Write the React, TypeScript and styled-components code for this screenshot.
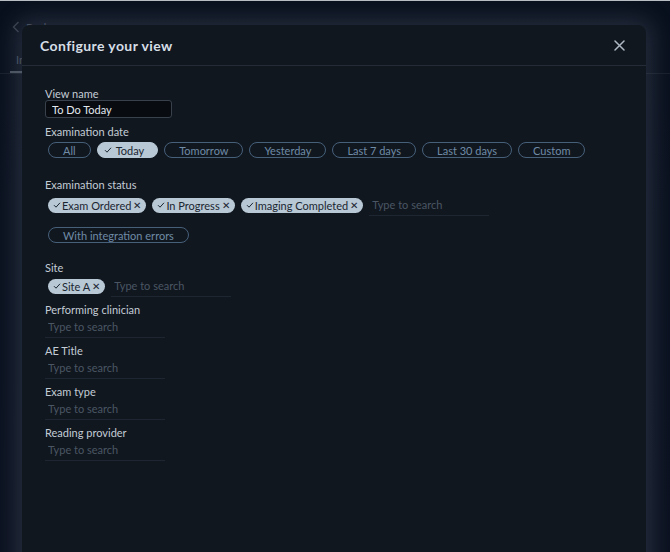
import React, { FC } from 'react';
import styled, { createGlobalStyle } from 'styled-components';

const GlobalStyle = createGlobalStyle`
    html, body {
        margin: 0;
        padding: 0;
        background: #0b1322;
        font-family: Lato, "Noto Sans", sans-serif;
        overflow: hidden;
    }
`;

const Page = styled.div`
    position: relative;
    width: 670px;
    height: 552px;
    overflow: hidden;
    background: linear-gradient(180deg, #0b1222 0%, #0d1526 60%, #0e1626 100%);
    border-top: 1px solid #b8bdc4;
    box-sizing: border-box;
`;

const TopBar = styled.div`
    display: flex;
    align-items: center;
    gap: 6px;
    height: 52px;
    padding-left: 12px;
    color: #8a96a6;
    font-size: 11px;
`;

const Tabs = styled.div`
    display: flex;
    height: 20px;
    border-bottom: 1px solid #2a3342;
`;

const Tab = styled.div`
    padding: 0 6px;
    margin-left: 10px;
    color: #8a96a6;
    font-size: 11px;
    border-bottom: 2px solid #9aa6b4;
`;

const Overlay = styled.div`
    position: absolute;
    inset: 0;
    background: rgba(9, 14, 26, 0.55);
    padding: 24px 0 0 22px;
`;

const Dialog = styled.div`
    width: 624px;
    height: 600px;
    background: #11171f;
    border-radius: 8px;
    box-shadow: 0 0 22px 6px rgba(96, 110, 132, 0.32);
    color: #c9d2db;
`;

const Header = styled.div`
    display: flex;
    align-items: center;
    justify-content: space-between;
    height: 40px;
    padding: 0 18px;
    border-bottom: 1px solid #242c37;
`;

const Title = styled.h2`
    margin: 0;
    font-size: 14px;
    font-weight: 700;
    color: #d6dee6;
    letter-spacing: 0.4px;
`;

const CloseButton = styled.button`
    display: flex;
    align-items: center;
    justify-content: center;
    width: 18px;
    height: 18px;
    padding: 0;
    background: none;
    border: none;
    cursor: pointer;
`;

const Body = styled.div`
    display: flex;
    flex-direction: column;
    padding: 21px 23px;
`;

const Field = styled.div<{ $gap?: number }>`
    display: flex;
    flex-direction: column;
    margin-top: ${(p) => p.$gap ?? 0}px;
`;

const Label = styled.label`
    font-size: 11px;
    line-height: 13px;
    color: #c3ccd5;
`;

const NameInput = styled.input`
    width: 127px;
    height: 18px;
    margin-top: 0;
    box-sizing: border-box;
    padding: 0 6px;
    background: #080c11;
    border: 1px solid #38414c;
    border-radius: 3px;
    color: #e2e8ee;
    font-family: inherit;
    font-size: 11px;
    outline: none;
`;

const ChipRow = styled.div<{ $top?: number }>`
    display: flex;
    flex-wrap: wrap;
    align-items: center;
    gap: 6px;
    margin-top: ${(p) => p.$top ?? 0}px;
    padding-left: 3px;
`;

const Chip = styled.button<{ $selected?: boolean }>`
    display: flex;
    align-items: center;
    gap: 3px;
    height: 16px;
    padding: 0 ${(p) => (p.$selected ? 13 : 14)}px 0 ${(p) => (p.$selected ? 6 : 14)}px;
    box-sizing: border-box;
    border-radius: 9px;
    border: 1px solid ${(p) => (p.$selected ? '#b8c8d5' : '#46607a')};
    background: ${(p) => (p.$selected ? '#b8c8d5' : 'transparent')};
    color: ${(p) => (p.$selected ? '#1b2631' : '#6f8ba6')};
    font-family: inherit;
    font-size: 11px;
    line-height: 1;
    white-space: nowrap;
    cursor: pointer;
`;

const Tag = styled.span`
    display: flex;
    align-items: center;
    height: 15px;
    padding: 0 5px;
    border-radius: 8px;
    background: #b8c8d5;
    color: #1b2631;
    font-size: 11px;
    line-height: 1;
    white-space: nowrap;
`;

const TagX = styled.span`
    margin-left: 2px;
    font-size: 10px;
`;

const SearchBox = styled.input`
    width: 120px;
    height: 22px;
    box-sizing: border-box;
    padding: 0 3px;
    background: transparent;
    border: none;
    border-bottom: 1px solid #1e2731;
    color: #c9d2db;
    font-family: inherit;
    font-size: 11px;
    outline: none;

    &::placeholder {
        color: #4a5663;
    }
`;

const Check = () => (
    <svg width="8" height="8" viewBox="0 0 8 8" style={{ marginRight: 1 }}>
        <path d="M1 4.2 L3 6.2 L7 1.8" fill="none" stroke="currentColor" strokeWidth="1" />
    </svg>
);

const CloseIcon = () => (
    <svg width="11" height="11" viewBox="0 0 11 11">
        <path d="M1 1 L10 10 M10 1 L1 10" stroke="#aeb9c4" strokeWidth="1.5" strokeLinecap="round" />
    </svg>
);

const ChevronLeft = () => (
    <svg width="8" height="12" viewBox="0 0 8 12">
        <path d="M6.5 1 L1.5 6 L6.5 11" fill="none" stroke="#6d7888" strokeWidth="1.4" />
    </svg>
);

const dateOptions = ['All', 'Today', 'Tomorrow', 'Yesterday', 'Last 7 days', 'Last 30 days', 'Custom'];
const statuses = ['Exam Ordered', 'In Progress', 'Imaging Completed'];
const searchFields = ['Performing clinician', 'AE Title', 'Exam type', 'Reading provider'];

const TagChip: FC<{ label: string }> = ({ label }) => (
    <Tag>
        <Check />
        {label}
        <TagX>✕</TagX>
    </Tag>
);

const App: FC = () => (
    <>
        <GlobalStyle />
        <Page>
            <TopBar>
                <ChevronLeft />
                <span>Back</span>
            </TopBar>
            <Tabs>
                <Tab>In</Tab>
            </Tabs>
            <Overlay>
                <Dialog>
                    <Header>
                        <Title>Configure your view</Title>
                        <CloseButton type="button">
                            <CloseIcon />
                        </CloseButton>
                    </Header>
                    <Body>
                        <Field>
                            <Label>View name</Label>
                            <NameInput defaultValue="To Do Today" />
                        </Field>
                        <Field $gap={7}>
                            <Label>Examination date</Label>
                            <ChipRow $top={4}>
                                {dateOptions.map((d) => (
                                    <Chip key={d} type="button" $selected={d === 'Today'}>
                                        {d === 'Today' && <Check />}
                                        {d}
                                    </Chip>
                                ))}
                            </ChipRow>
                        </Field>
                        <Field $gap={20}>
                            <Label>Examination status</Label>
                            <ChipRow $top={3}>
                                {statuses.map((s) => (
                                    <TagChip key={s} label={s} />
                                ))}
                                <SearchBox placeholder="Type to search" />
                            </ChipRow>
                            <ChipRow $top={11}>
                                <Chip type="button">With integration errors</Chip>
                            </ChipRow>
                        </Field>
                        <Field $gap={18}>
                            <Label>Site</Label>
                            <ChipRow $top={1}>
                                <TagChip label="Site A" />
                                <SearchBox placeholder="Type to search" />
                            </ChipRow>
                        </Field>
                        {searchFields.map((f) => (
                            <Field key={f} $gap={6}>
                                <Label>{f}</Label>
                                <SearchBox placeholder="Type to search" />
                            </Field>
                        ))}
                    </Body>
                </Dialog>
            </Overlay>
        </Page>
    </>
);

export default App;
